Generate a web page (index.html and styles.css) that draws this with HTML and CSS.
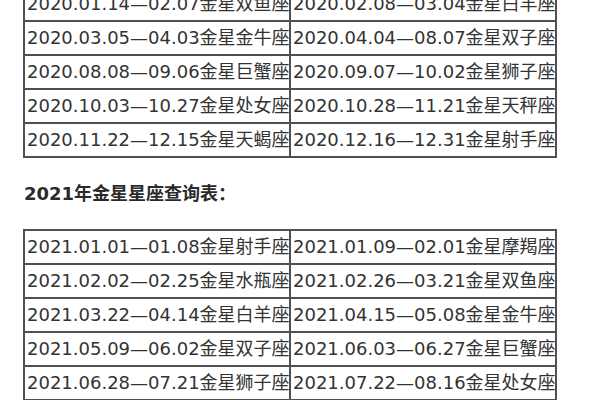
FILE: index.html
```html
<!DOCTYPE html>
<html lang="zh-CN">
<head>
<meta charset="utf-8">
<title>金星星座查询表</title>
<link rel="stylesheet" href="styles.css">
</head>
<body>
<div class="page">
  <table class="astro astro-first">
    <tr><td>2020.01.14—02.07金星双鱼座</td><td>2020.02.08—03.04金星白羊座</td></tr>
    <tr><td>2020.03.05—04.03金星金牛座</td><td>2020.04.04—08.07金星双子座</td></tr>
    <tr><td>2020.08.08—09.06金星巨蟹座</td><td>2020.09.07—10.02金星狮子座</td></tr>
    <tr><td>2020.10.03—10.27金星处女座</td><td>2020.10.28—11.21金星天秤座</td></tr>
    <tr><td>2020.11.22—12.15金星天蝎座</td><td>2020.12.16—12.31金星射手座</td></tr>
  </table>
  <h2 class="heading">2021年金星星座查询表：</h2>
  <table class="astro">
    <tr><td>2021.01.01—01.08金星射手座</td><td>2021.01.09—02.01金星摩羯座</td></tr>
    <tr><td>2021.02.02—02.25金星水瓶座</td><td>2021.02.26—03.21金星双鱼座</td></tr>
    <tr><td>2021.03.22—04.14金星白羊座</td><td>2021.04.15—05.08金星金牛座</td></tr>
    <tr><td>2021.05.09—06.02金星双子座</td><td>2021.06.03—06.27金星巨蟹座</td></tr>
    <tr><td>2021.06.28—07.21金星狮子座</td><td>2021.07.22—08.16金星处女座</td></tr>
  </table>
</div>
</body>
</html>
```
FILE: styles.css
```css
html, body {
  margin: 0;
  padding: 0;
  background: #ffffff;
}
body {
  width: 600px;
  height: 400px;
  overflow: hidden;
  font-family: "DejaVu Sans", "Noto Sans CJK SC", sans-serif;
  color: #333333;
}
.page {
  padding-left: 23px;
}
.astro {
  border-collapse: collapse;
  table-layout: fixed;
  width: 534px;
  border: 2px solid #505050;
}
.astro-first {
  margin-top: -14px;
}
.astro td {
  border: 2px solid #505050;
  height: 32px;
  padding: 0 0 0 2px;
  font-size: 18px;
  line-height: 32px;
  white-space: nowrap;
  overflow: hidden;
  box-sizing: border-box;
}
.heading {
  margin: 24px 0 23px 1px;
  font-size: 18px;
  line-height: 24px;
  font-weight: bold;
  color: #2a2a2a;
}
```
